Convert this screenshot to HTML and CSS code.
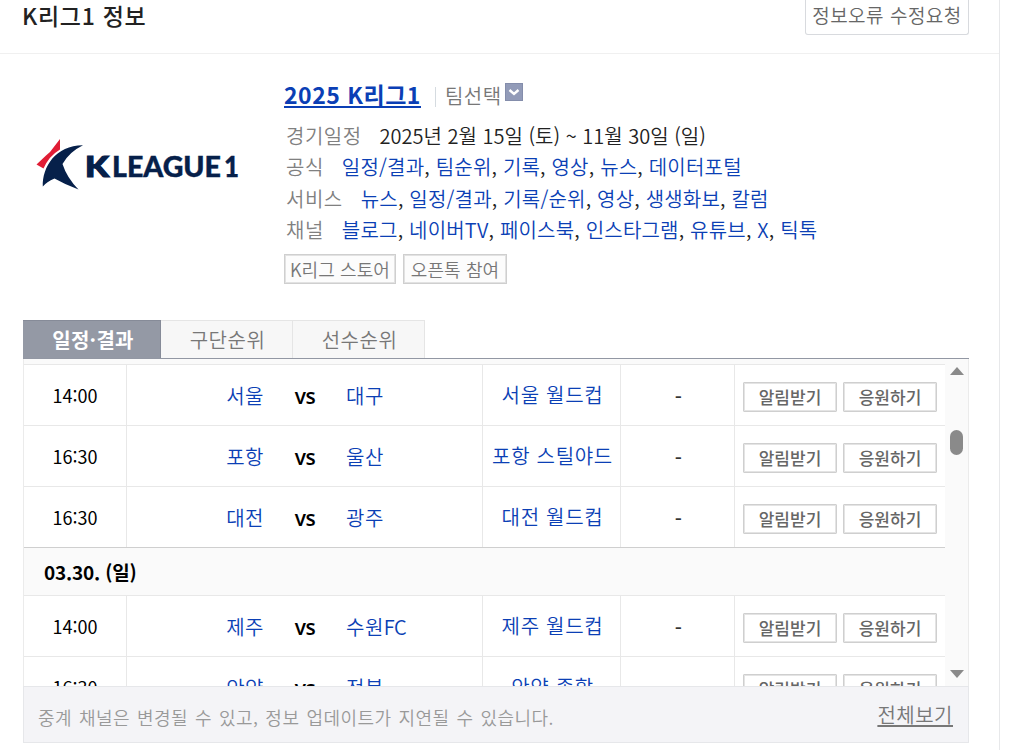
FILE: index.html
```html
<!DOCTYPE html>
<html lang="ko">
<head>
    <meta charset="UTF-8">
    <meta name="viewport" content="width=device-width, initial-scale=1.0">
    <title>K리그1 정보</title>
    <link rel="stylesheet" href="styles.css">
</head>
<body>
    <div class="container">
        <div class="header">
            <h2>K리그1 정보</h2>
            <a class="report" href="#">정보오류 수정요청</a>
        </div>

        <div class="info">
            <svg class="logo" width="210" height="60" viewBox="0 0 210 60">
                <path d="M24 4 L24 14.5 Q13 21 7.5 33.5 L0.5 29.5 L10 20.500 L14 17 Z" fill="#e01d35"/>
                <path d="M47 10.2 Q33 17 26.5 29 Q31 43 42.5 54.5 Q29 49.5 18.5 43.5 Q10.5 47 6.8 51.5 C6 32 20 10 47 10.2 Z" fill="#06204a"/>
                <text class="logo-text k" x="49" y="42" textLength="24" lengthAdjust="spacingAndGlyphs">K</text>
                <text class="logo-text" x="76" y="42" textLength="109" lengthAdjust="spacingAndGlyphs">LEAGUE</text>
                <text class="logo-text" x="188" y="42" textLength="15" lengthAdjust="spacingAndGlyphs">1</text>
            </svg>
            <div class="detail">
                <div class="title">
                    <a class="league" href="#">2025 K리그1</a>
                    <span class="bar"></span>
                    <span class="team">팀선택</span>
                    <svg class="arrow" width="18" height="18" viewBox="0 0 18 18">
                        <rect x="0.5" y="0.5" width="17" height="17" fill="#929bb8" stroke="#848dab"/>
                        <path d="M4.5 7 L9 11 L13.5 7" fill="none" stroke="#fff" stroke-width="2.4"/>
                    </svg>
                </div>
                <dl>
                    <div class="line date"><dt>경기일정</dt><dd>2025년 2월 15일 (토) ~ 11월 30일 (일)</dd></div>
                    <div class="line"><dt>공식</dt><dd><a href="#">일정/결과</a>, <a href="#">팀순위</a>, <a href="#">기록</a>, <a href="#">영상</a>, <a href="#">뉴스</a>, <a href="#">데이터포털</a></dd></div>
                    <div class="line"><dt>서비스</dt><dd><a href="#">뉴스</a>, <a href="#">일정/결과</a>, <a href="#">기록/순위</a>, <a href="#">영상</a>, <a href="#">생생화보</a>, <a href="#">칼럼</a></dd></div>
                    <div class="line"><dt>채널</dt><dd><a href="#">블로그</a>, <a href="#">네이버TV</a>, <a href="#">페이스북</a>, <a href="#">인스타그램</a>, <a href="#">유튜브</a>, <a href="#">X</a>, <a href="#">틱톡</a></dd></div>
                </dl>
                <div class="links">
                    <a class="store" href="#">K리그 스토어</a>
                    <a class="talk" href="#">오픈톡 참여</a>
                </div>
            </div>
        </div>

        <div class="tabs">
            <a class="tab on" href="#">일정·결과</a>
            <a class="tab" href="#">구단순위</a>
            <a class="tab" href="#">선수순위</a>
        </div>

        <div class="schedule">
            <div class="list">
                <div class="strip"></div>
                <div class="row">
                    <div class="time">14:00</div>
                    <div class="match"><a class="home" href="#">서울</a><b>vs</b><a href="#">대구</a></div>
                    <div class="place"><a href="#">서울 월드컵</a></div>
                    <div class="tv">-</div>
                    <div class="btns"><button>알림받기</button><button>응원하기</button></div>
                </div>
                <div class="row">
                    <div class="time">16:30</div>
                    <div class="match"><a class="home" href="#">포항</a><b>vs</b><a href="#">울산</a></div>
                    <div class="place"><a href="#">포항 스틸야드</a></div>
                    <div class="tv">-</div>
                    <div class="btns"><button>알림받기</button><button>응원하기</button></div>
                </div>
                <div class="row last">
                    <div class="time">16:30</div>
                    <div class="match"><a class="home" href="#">대전</a><b>vs</b><a href="#">광주</a></div>
                    <div class="place"><a href="#">대전 월드컵</a></div>
                    <div class="tv">-</div>
                    <div class="btns"><button>알림받기</button><button>응원하기</button></div>
                </div>
                <div class="day">03.30. (일)</div>
                <div class="row">
                    <div class="time">14:00</div>
                    <div class="match"><a class="home" href="#">제주</a><b>vs</b><a href="#">수원<span class="en">FC</span></a></div>
                    <div class="place"><a href="#">제주 월드컵</a></div>
                    <div class="tv">-</div>
                    <div class="btns"><button>알림받기</button><button>응원하기</button></div>
                </div>
                <div class="row">
                    <div class="time">16:30</div>
                    <div class="match"><a class="home" href="#">안양</a><b>vs</b><a href="#">전북</a></div>
                    <div class="place"><a href="#">안양 종합</a></div>
                    <div class="tv">-</div>
                    <div class="btns"><button>알림받기</button><button>응원하기</button></div>
                </div>
            </div>
            <div class="scrollbar">
                <span class="up"></span>
                <span class="thumb"></span>
                <span class="down"></span>
            </div>
        </div>

        <div class="footer">
            <p>중계 채널은 변경될 수 있고, 정보 업데이트가 지연될 수 있습니다.</p>
            <a href="#">전체보기</a>
        </div>
    </div>
</body>
</html>
```
FILE: styles.css
```css
* { box-sizing: border-box; }
body { margin: 0; font-family: "Noto Sans CJK KR", sans-serif; font-size: 20px; font-weight: 350; letter-spacing: 0.5px; color: #222; background: #fff; overflow: hidden; }
a { color: #0b3fb5; text-decoration: none; }
h2, p, dl, dd { margin: 0; }

.container { width: 1000px; height: 750px; border-right: 1px solid #e7e8ea; }

/* header */
.header { display: flex; justify-content: space-between; align-items: flex-start; height: 54px; padding: 0 30px 0 22px; border-bottom: 1px solid #f0f0f0; }
.header h2 { font-size: 23px; font-weight: 500; letter-spacing: 0.7px; line-height: 30px; white-space: nowrap; }
.report { width: 164px; height: 35px; border: 1px solid #d8dade; border-top: 0; border-radius: 0 0 3px 3px; color: #666; font-size: 19px; line-height: 30px; text-align: center; white-space: nowrap; }

/* league info */
.info { display: flex; height: 266px; }
.logo { margin: 81px 38px 0 36px; flex: none; }
.logo-text { font-family: Lato, sans-serif; font-size: 29px; font-weight: 900; letter-spacing: 0; fill: #06204a; stroke: #06204a; stroke-width: 0.4px; }
.logo-text.k { stroke-width: 1.2px; }
.detail { padding-top: 22px; }
.title { display: flex; align-items: center; height: 38px; }
.league { font-size: 23px; font-weight: 700; line-height: 24px; border-bottom: 2px solid #0b3fb5; white-space: nowrap; }
.bar { width: 1px; height: 20px; margin: 4px 9px 0 14px; background: #d5dbe0; }
.team { color: #777; }
.arrow { margin: 0 0 6px 3px; }
.line { display: flex; height: 31.3px; line-height: 31px; padding-left: 2px; white-space: nowrap; }
.title + dl { padding-top: 6px; }
.line dt { color: #808080; margin-right: 18px; }
.line dd { letter-spacing: 0.2px; }
.date dd { letter-spacing: 0; }
.links { display: flex; gap: 7px; margin-top: 9px; letter-spacing: 0.1px; }
.links a { height: 30px; border: 1px solid #cfcfcf; box-shadow: inset 0 0 0 1px #e2e2e2; background: #fcfcfc; color: #777; font-size: 18px; line-height: 28px; text-align: center; white-space: nowrap; }
.store { width: 112px; }
.talk { width: 104px; }

/* tabs */
.tabs { display: flex; width: 946px; height: 39px; margin-left: 23px; border-bottom: 1px solid #9297a3; }
.tab { width: 132px; padding-left: 2px; border: 1px solid #e5e5e5; border-width: 1px 1px 0 0; background: #f7f7f7; color: #777; line-height: 37px; text-align: center; }
.tab.on { width: 138px; padding-left: 3px; border-color: #868b98; background: #9499a5; color: #fff; font-weight: 700; letter-spacing: 0.3px; }

/* schedule */
.schedule { display: flex; width: 946px; height: 327px; margin-left: 23px; border: 1px solid #ebebeb; border-width: 0 1px; overflow: hidden; }
.list { width: 921px; flex: none; }
.strip { height: 6px; background: #fafafa; border-bottom: 1px solid #e8e8e8; }
.row { display: grid; grid-template-columns: 103px 356px 138px 114px 210px; grid-template-rows: 60px; height: 61px; border-bottom: 1px solid #e8e8e8; line-height: 61px; white-space: nowrap; }
.row > div { border-right: 1px solid #e8e8e8; }
.row > .btns { border-right: 0; }
.row.last { border-color: #cfcfcf; }
.time { text-align: center; color: #000; font-weight: 400; font-size: 18px; letter-spacing: 0; line-height: 60px; }
.match { display: grid; grid-template-columns: 137px 82px 1fr; grid-template-rows: 60px; }
.match .home { text-align: right; }
.match .en { letter-spacing: -0.5px; }
.match b { color: #000; font-family: "Open Sans", sans-serif; font-size: 21px; font-weight: 600; letter-spacing: -0.5px; text-align: center; line-height: 62px; }
.place { text-align: center; letter-spacing: 0.7px; line-height: 60px; padding-left: 2px; }
.tv { text-align: center; color: #333; font-weight: 500; line-height: 63px; padding-left: 2px; }
.btns { display: flex; align-items: center; gap: 6px; padding: 3px 0 0 8px; }
.btns button { width: 94px; height: 30px; padding: 0; border: 1px solid #cfcfcf; border-radius: 1px; box-shadow: inset 0 0 0 1px #e4e4e4; background: #fff; color: #666; font: 500 17px "Noto Sans CJK KR", sans-serif; line-height: 24px; }
.day { height: 48px; padding-left: 20px; border-bottom: 1px solid #e8e8e8; background: #fafafa; color: #000; font-size: 19px; font-weight: 700; letter-spacing: -0.2px; line-height: 48px; }
.scrollbar { display: flex; flex-direction: column; align-items: center; width: 23px; background: #fafafa; }
.up { margin-top: 8px; border: 7px solid transparent; border-top: 0; border-bottom: 8px solid #8a8a8a; }
.thumb { width: 13px; height: 25px; margin-top: 55px; border-radius: 7px; background: #8a8a8a; }
.down { margin-top: 215px; border: 7px solid transparent; border-bottom: 0; border-top: 8px solid #8a8a8a; }

/* footer */
.footer { display: flex; justify-content: space-between; width: 946px; height: 57px; margin-left: 23px; padding: 0 15px 0 14px; border: 1px solid #e6e7ea; background: #f4f4f7; line-height: 60px; white-space: nowrap; }
.footer p { color: #999; font-size: 18px; letter-spacing: 0.45px; word-spacing: 1.5px; }
.footer a { color: #777; line-height: 56px; text-decoration: underline; text-underline-offset: 2px; }
```
